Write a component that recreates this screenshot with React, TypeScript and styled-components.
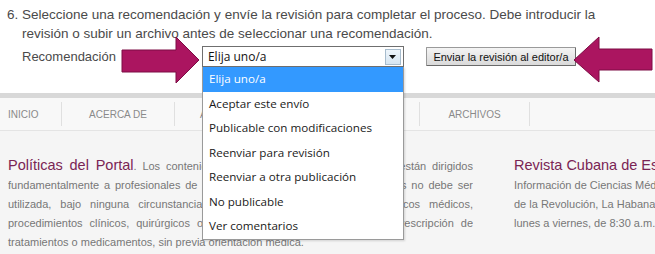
import React from "react";
import styled, { createGlobalStyle } from "styled-components";

const GlobalStyle = createGlobalStyle`
  html, body {
    margin: 0;
    padding: 0;
    background: #ffffff;
  }
`;

const magenta = "#ab1560";

export default function App() {
  return (
    <Page>
      <GlobalStyle />

      <Instructions>
        <Step>
          <StepNo>6.</StepNo>
          Seleccione una recomendación y envíe la revisión para completar el proceso. Debe introducir la
          <br />
          revisión o subir un archivo antes de seleccionar una recomendación.
        </Step>
      </Instructions>

      <FormRow>
        <Label>Recomendación</Label>
        <ArrowRight />
        <SelectWrap>
          <SelectBox>
            <SelectValue>Elija uno/a</SelectValue>
            <SelectButton>
              <svg width="7" height="4" viewBox="0 0 7 4">
                <polygon points="0,0 7,0 3.5,4" fill="#111" />
              </svg>
            </SelectButton>
          </SelectBox>
          <ListBox>
            {options.map((o, i) => (
              <Option key={o} $active={i === 0}>{o}</Option>
            ))}
          </ListBox>
        </SelectWrap>
        <SendButton>Enviar la revisión al editor/a</SendButton>
        <ArrowLeft />
      </FormRow>

      <Portal>
        <Nav>
          {navItems.map((n) => (
            <NavItem key={n.label} $w={n.w} $first={n.first}>{n.label}</NavItem>
          ))}
        </Nav>

        <Content>
          <LeftCol>
            <JLine>
              <Title>Políticas del Portal</Title>. Los contenidos de este portal web de la revista están dirigidos
            </JLine>
            <JLine>fundamentalmente a profesionales de la salud. La información de sus páginas no debe ser</JLine>
            <JLine>utilizada, bajo ninguna circunstancia, como base para realizar diagnósticos médicos,</JLine>
            <JLine>procedimientos clínicos, quirúrgicos o análisis de laboratorio, ni para la prescripción de</JLine>
            <LastLine>tratamientos o medicamentos, sin previa orientación médica.</LastLine>
          </LeftCol>
          <RightCol>
            <RLine><Title>Revista Cubana de Estomatología</Title>. Centro Nacional de</RLine>
            <RLine>Información de Ciencias Médicas, Calle 27 No. 110, Plaza</RLine>
            <RLine>de la Revolución, La Habana, Cuba. Horario de atención:</RLine>
            <RLine>lunes a viernes, de 8:30 a.m. a 4:30 p.m.</RLine>
          </RightCol>
        </Content>
      </Portal>
    </Page>
  );
}

const options = [
  "Elija uno/a",
  "Aceptar este envío",
  "Publicable con modificaciones",
  "Reenviar para revisión",
  "Reenviar a otra publicación",
  "No publicable",
  "Ver comentarios",
];

const navItems = [
  { label: "INICIO", w: 62, first: true },
  { label: "ACERCA DE", w: 113 },
  { label: "ÁREA PERSONAL", w: 135 },
  { label: "BUSCAR", w: 110 },
  { label: "ARCHIVOS", w: 110 },
];

function ArrowRight() {
  return (
    <ArrowSvg width="84" height="48" viewBox="0 0 84 48" $ml={1}>
      <polygon
        points="5,14 59,14 59,1 82,24 59,47 59,36 5,36"
        fill={magenta}
        stroke="#7d0c44"
        strokeWidth="1"
        strokeLinejoin="round"
      />
    </ArrowSvg>
  );
}

function ArrowLeft() {
  return (
    <ArrowSvg width="83" height="48" viewBox="0 0 83 48" $ml={-5}>
      <polygon
        points="3,24 28,1 28,13 81,13 81,34 28,34 28,46"
        fill={magenta}
        stroke="#7d0c44"
        strokeWidth="1"
        strokeLinejoin="round"
      />
    </ArrowSvg>
  );
}

const Page = styled.div`
  position: relative;
  width: 655px;
  height: 254px;
  overflow: hidden;
  background: #ffffff;
  font-family: "Liberation Sans", Arial, sans-serif;
`;

const Instructions = styled.div`
  padding: 5px 0 0 7px;
`;

const Step = styled.p`
  margin: 0;
  padding-left: 15px;
  text-indent: -15px;
  font-size: 13.5px;
  line-height: 19px;
  color: #4a4a4a;
  white-space: nowrap;
`;

const StepNo = styled.span`
  display: inline-block;
  width: 15px;
  text-indent: 0;
`;

const FormRow = styled.div`
  display: flex;
  align-items: center;
  height: 21px;
  margin: 3px 0 0 22px;
`;

const Label = styled.span`
  font-size: 13px;
  color: #4a4a4a;
`;

const ArrowSvg = styled.svg<{ $ml: number }>`
  flex: none;
  margin: -10px 0 -17px ${(p) => p.$ml}px;
  position: relative;
  z-index: 3;
`;

const SelectWrap = styled.div`
  position: relative;
  width: 202px;
  margin-left: 1px;
  z-index: 2;
`;

const SelectBox = styled.div`
  display: flex;
  align-items: center;
  box-sizing: border-box;
  height: 21px;
  border: 1px solid #6f6f6f;
  background: #ffffff;
`;

const SelectValue = styled.span`
  flex: 1;
  padding-left: 5px;
  font-family: "Open Sans", "DejaVu Sans", sans-serif;
  font-size: 12px;
  color: #111;
`;

const SelectButton = styled.span`
  display: flex;
  align-items: center;
  justify-content: center;
  box-sizing: border-box;
  width: 16px;
  height: 16px;
  margin-right: 2px;
  border: 1px solid #a7bccd;
  background: linear-gradient(#eef5fb, #d6e5f1);
`;

const ListBox = styled.div`
  position: absolute;
  top: 100%;
  left: 0;
  width: 202px;
  box-sizing: border-box;
  border: 1px solid #9a9a9a;
  border-top: none;
  background: #ffffff;
  box-shadow: 1px 1px 2px rgba(0, 0, 0, 0.15);
`;

const Option = styled.div<{ $active?: boolean }>`
  height: 24.5px;
  line-height: 24.5px;
  padding-left: 6px;
  font-family: "Open Sans", "DejaVu Sans", sans-serif;
  font-size: 11.65px;
  white-space: nowrap;
  color: ${(p) => (p.$active ? "#ffffff" : "#1a1a1a")};
  background: ${(p) => (p.$active ? "#3399ff" : "transparent")};
`;

const SendButton = styled.button`
  box-sizing: border-box;
  width: 150px;
  height: 19px;
  margin-left: 22px;
  padding: 0;
  border: 1px solid #9a9a9a;
  border-right-color: #6a6a6a;
  border-bottom-color: #6a6a6a;
  border-radius: 1px;
  background: linear-gradient(#f4f4f4, #dadada);
  font-family: "Liberation Sans", Arial, sans-serif;
  font-size: 11px;
  color: #111;
  white-space: nowrap;
`;

const Portal = styled.div`
  margin-top: 26px;
  border-top: 5px solid #d8d8d8;
  background: #f5f5f5;
`;

const Nav = styled.div`
  display: flex;
  height: 32px;
  background: #f8f8f8;
  border-bottom: 1px solid #e4e4e4;
`;

const NavItem = styled.div<{ $w: number; $first?: boolean }>`
  display: flex;
  align-items: center;
  justify-content: ${(p) => (p.$first ? "flex-start" : "center")};
  box-sizing: border-box;
  width: ${(p) => p.$w}px;
  padding-left: ${(p) => (p.$first ? 8 : 0)}px;
  margin: 4px 0;
  border-right: 1px solid #e0e0e0;
  font-size: 10px;
  color: #8a8a8a;
  white-space: nowrap;
`;

const Content = styled.div`
  display: grid;
  grid-template-columns: 465px 320px;
  column-gap: 41px;
  padding: 25px 0 0 8px;
  height: 130px;
`;

const LeftCol = styled.div`
  font-size: 11px;
  line-height: 19px;
  color: #777;
`;

const JLine = styled.div`
  text-align: justify;
  text-align-last: justify;
  white-space: nowrap;
  overflow: hidden;
`;

const LastLine = styled.div`
  white-space: nowrap;
`;

const RightCol = styled.div`
  font-size: 11px;
  line-height: 19px;
  color: #777;
`;

const RLine = styled.div`
  white-space: nowrap;
`;

const Title = styled.span`
  font-size: 14.5px;
  color: #7a2454;
`;
